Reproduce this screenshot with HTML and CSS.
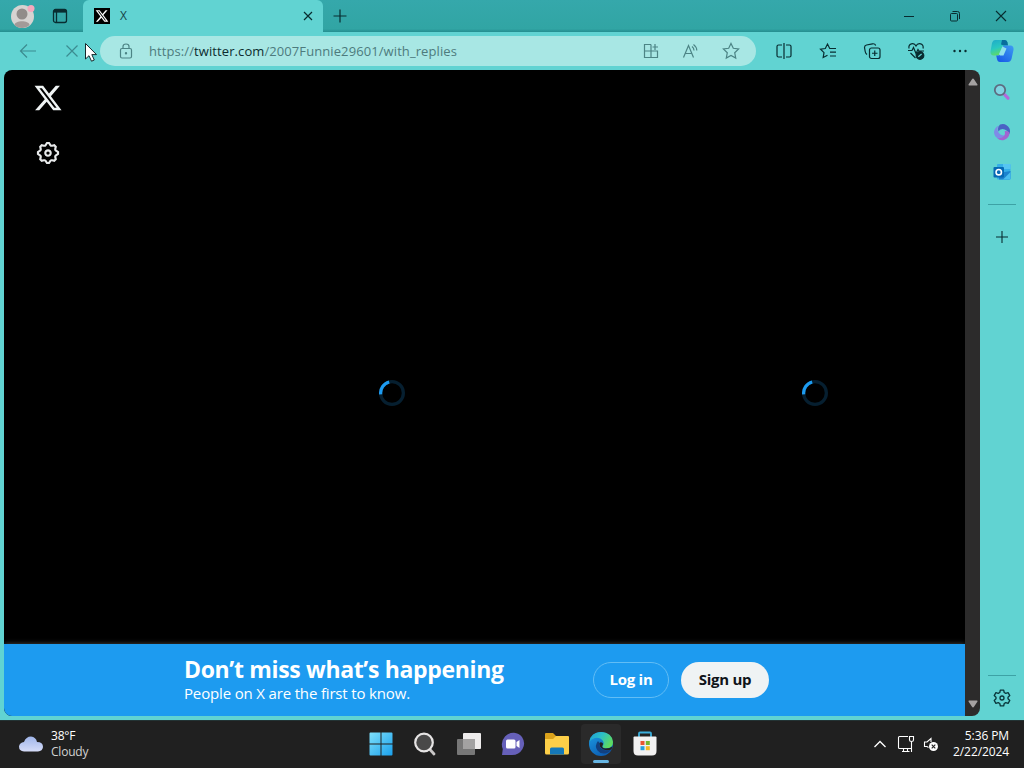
FILE: index.html
```html
<!DOCTYPE html>
<html lang="en">
<head>
<meta charset="UTF-8">
<title>X</title>
<link rel="stylesheet" href="styles.css">
</head>
<body>

<header class="titlebar">
  <div class="profile">
    <svg width="26" height="26" viewBox="0 0 26 26"><circle cx="12.5" cy="13.5" r="11.5" fill="#d6d3d1"/><circle cx="12" cy="11" r="5.5" fill="#918c8a"/><path d="M4.5 22C5 17 19 17 19.500 22C16 26 8 26 4.500 22Z" fill="#a39a98"/><circle cx="21" cy="5.500" r="3.500" fill="#f4a9bd"/></svg>
  </div>
  <div class="workspace">
    <svg width="16" height="16" viewBox="0 0 16 16" fill="none" stroke="#082c30" stroke-width="1.300"><rect x="1.500" y="1.500" width="13" height="13" rx="2"/><path d="M2 3.500H14M4.500 4V14" /><path d="M2 3H14" stroke-width="3"/></svg>
  </div>
  <div class="tab">
    <svg class="favicon" width="16" height="16" viewBox="0 0 24 24"><rect width="24" height="24" fill="#000"/><g transform="translate(1.400 1.400) scale(.88)" fill="#fff"><path d="M18.244 2.250h3.308l-7.227 8.260 8.502 11.240H16.170l-5.214-6.817L4.990 21.750H1.680l7.730-8.835L1.254 2.250H8.080l4.713 6.231zm-1.161 17.520h1.833L7.084 4.126H5.117z"/></g></svg>
    <span>X</span>
    <svg class="tab-close" width="10" height="10" viewBox="0 0 10 10"><path d="M1 1l8 8M9 1L1 9" stroke="#082c30" stroke-width="1.200"/></svg>
  </div>
  <svg class="new-tab" width="14" height="14" viewBox="0 0 14 14"><path d="M7 0.500V13.500M.5 7H13.500" stroke="#082c30" stroke-width="1.200"/></svg>
  <div class="window-buttons">
    <span><svg width="12" height="12" viewBox="0 0 12 12"><path d="M1 6.500H11" stroke="#082c30"/></svg></span>
    <span><svg width="12" height="12" viewBox="0 0 12 12" fill="none" stroke="#082c30"><rect x="1.500" y="3.500" width="7" height="7.500" rx="1"/><path d="M3.500 1.500H8.500Q10.500 1.500 10.500 3.500V9"/></svg></span>
    <span><svg width="12" height="12" viewBox="0 0 12 12"><path d="M1 1l10 10M11 1L1 11" stroke="#082c30" stroke-width="1.100"/></svg></span>
  </div>
</header>

<nav class="toolbar">
  <span class="tool faded"><svg width="18" height="16" viewBox="0 0 18 16"><path d="M17 8H1.500M8 1.500L1.500 8L8 14.500"/></svg></span>
  <span class="tool faded"><svg width="14" height="14" viewBox="0 0 14 14"><path d="M1.500 1.500l11 11M12.500 1.500l-11 11"/></svg></span>
  <div class="address">
    <svg class="lock" width="14" height="16" viewBox="0 0 14 16"><rect x="1.500" y="5.500" width="11" height="9.500" rx="1.500"/><path d="M4 5.500V3.500Q4 1 7 1T10 3.500V5.500"/><circle cx="7" cy="10.300" r=".6"/></svg>
    <span class="url">https://<b>twitter.com</b>/2007Funnie29601/with_replies</span>
    <span class="address-tool"><svg width="16" height="16" viewBox="0 0 16 16"><path d="M8 1.500H1.500V14.500H14.500V8H1.500M8 1.500V14.500M12 1V7M9.500 4H15"/></svg></span>
    <span class="address-tool"><svg width="18" height="16" viewBox="0 0 18 16"><path d="M1.500 14.500L6.500 2.500L11.500 14.500M3.200 10.500H9.800M10 3.500Q12 5 12 7.500M11.500 1.500Q14.800 4 14.800 7.500"/></svg></span>
    <span class="address-tool"><svg width="18" height="18" viewBox="0 0 18 18"><path d="M9 1.500L11.300 6.300L16.600 7L12.700 10.700L13.700 16L9 13.400L4.300 16L5.300 10.700L1.400 7L6.700 6.300Z"/></svg></span>
  </div>
  <span class="tool"><svg width="18" height="18" viewBox="0 0 18 18"><path d="M7 3H3.500Q2 3 2 4.500V13.500Q2 15 3.500 15H7M11 3H14.500Q16 3 16 4.500V13.500Q16 15 14.500 15H11M9 1V17"/></svg></span>
  <span class="tool"><svg width="18" height="18" viewBox="0 0 18 18"><path d="M17 6.500H10.700L8.500 2L6.300 6.500L1.500 7.200L5 10.700L4.200 15.500L8.500 13.300M11 10.200H17M11 14H17"/></svg></span>
  <span class="tool"><svg width="18" height="18" viewBox="0 0 18 18"><rect x="6.500" y="6" width="10.500" height="10.500" rx="2"/><path d="M11.750 8.500V14M9 11.250H14.500M4 12.500Q2.500 11.500 2.200 9.500L1.500 5.500Q1.500 3.500 3.500 3L9.500 1.800Q12 1.500 12.700 3.500"/></svg></span>
  <span class="tool"><svg width="18" height="18" viewBox="0 0 18 18"><path d="M1 8.500H5L6.500 5.500L9 11.500L11 7.500L12 9H17M2 6.500C1 1.500 7 0 9 4C11 0 17.500 1.500 16 6.500M3.500 11L8.500 16"/><circle cx="13" cy="13.500" r="3.800" fill="#082c30"/><path d="M11.300 14.800L14.600 12" stroke="#61d3d2"/></svg></span>
  <span class="tool"><svg width="16" height="4" viewBox="0 0 16 4"><g fill="#082c30" stroke="none"><circle cx="2.500" cy="2" r="1.200"/><circle cx="8" cy="2" r="1.200"/><circle cx="13.500" cy="2" r="1.200"/></g></svg></span>
  <span class="copilot">
    <svg width="24" height="24" viewBox="0 0 24 24">
      <defs>
        <linearGradient id="cpLeft" x1="0" y1="0" x2=".4" y2="1"><stop offset="0" stop-color="#1fa9c9"/><stop offset=".55" stop-color="#29c8c1"/><stop offset="1" stop-color="#62dc62"/></linearGradient>
        <linearGradient id="cpRight" x1="1" y1="0" x2=".2" y2="1"><stop offset="0" stop-color="#3e9df2"/><stop offset="1" stop-color="#175be7"/></linearGradient>
      </defs>
      <path d="M5 1H15Q17 1 17.500 3.500L18 6.500H14Q12.500 6.500 12 8L10 14.500Q9.500 16.500 7 16.500H4Q.2 16.500 .5 12.500L2 4Q2.800 1 5 1Z" fill="url(#cpLeft)"/>
      <path d="M12 1H15Q17 1 17.500 3.500L18 6.500H14L11 5.500Z" fill="#086d9c"/>
      <path d="M18 6.500H21Q24 7 23.500 11L21.500 20Q20.500 23 18 23H10Q7.500 23 7 20L6.200 16.500H8.500Q10 16.500 10.500 14.500L12.500 8Q13 6.500 15 6.500Z" fill="url(#cpRight)"/>
      <path d="M12.500 7.500L16.500 9.500L13.500 16.500H10L9 15Z" fill="#8fe0ec"/>
    </svg>
  </span>
</nav>

<div class="middle">
  <main class="page">
    <div class="content">
      <div class="site-nav">
        <svg width="30" height="30" viewBox="0 0 24 24" fill="#eff3f4"><path d="M18.244 2.250h3.308l-7.227 8.260 8.502 11.240H16.170l-5.214-6.817L4.990 21.750H1.680l7.730-8.835L1.254 2.250H8.080l4.713 6.231zm-1.161 17.520h1.833L7.084 4.126H5.117z"/></svg>
        <svg width="26" height="26" viewBox="0 0 24 24" fill="#e7e9ea"><path d="M10.540 1.750h2.920l1.570 2.360c.11.17.32.25.53.21l2.530-.59 2.170 2.170-.58 2.540c-.05.2.04.41.21.53l2.360 1.570v2.920l-2.360 1.570c-.17.12-.26.33-.21.53l.58 2.540-2.170 2.170-2.530-.59c-.21-.04-.42.04-.53.21l-1.570 2.360h-2.920l-1.580-2.360c-.11-.17-.32-.25-.52-.21l-2.540.59-2.170-2.170.58-2.540c.05-.2-.03-.41-.21-.53l-2.350-1.570v-2.920L4.100 8.970c.18-.12.26-.33.21-.53L3.730 5.900 5.900 3.730l2.540.59c.2.04.41-.04.52-.21l1.580-2.360zm1.070 2l-.98 1.470C10.050 6.080 9 6.500 7.990 6.270l-1.460-.34-.6.6.33 1.460c.24 1.010-.18 2.070-1.050 2.640l-1.460.98v.78l1.460.98c.87.57 1.290 1.630 1.050 2.640l-.33 1.460.6.6 1.460-.34c1.010-.23 2.060.19 2.640 1.050l.98 1.470h.78l.97-1.470c.58-.86 1.630-1.280 2.650-1.050l1.450.34.61-.6-.34-1.460c-.23-1.010.18-2.070 1.050-2.640l1.470-.98v-.78l-1.470-.98c-.87-.57-1.280-1.630-1.050-2.640l.34-1.460-.61-.6-1.450.34c-1.020.23-2.070-.19-2.650-1.050l-.97-1.470h-.78zM12 10.500c-.83 0-1.500.67-1.500 1.500s.67 1.500 1.500 1.500c.83 0 1.500-.67 1.500-1.500s-.67-1.500-1.500-1.500zM8.500 12c0-1.930 1.560-3.500 3.500-3.500 1.930 0 3.500 1.570 3.500 3.500s-1.570 3.500-3.500 3.500c-1.940 0-3.500-1.570-3.500-3.500z"/></svg>
      </div>
      <div class="timeline">
        <svg class="spinner" viewBox="0 0 32 32"><circle class="track" cx="16" cy="16" r="14"/><circle class="arc" cx="16" cy="16" r="14"/></svg>
      </div>
      <div class="trends">
        <svg class="spinner" viewBox="0 0 32 32"><circle class="track" cx="16" cy="16" r="14"/><circle class="arc" cx="16" cy="16" r="14"/></svg>
      </div>
    </div>
    <div class="login-bar">
      <div class="login-text">
        <h2>Don’t miss what’s happening</h2>
        <p>People on X are the first to know.</p>
      </div>
      <button class="login">Log in</button>
      <button class="signup">Sign up</button>
    </div>
  </main>
  <div class="scrollbar">
    <svg width="10" height="8" viewBox="0 0 10 8"><path d="M5 .5Q5.600 .5 6 1.200L9.500 6.500Q9.800 7.500 8.800 7.500H1.200Q.2 7.500 .5 6.500L4 1.200Q4.400 .5 5 .5Z" fill="#a5a2a2"/></svg>
    <svg width="10" height="8" viewBox="0 0 10 8"><path d="M5 7.500Q5.600 7.500 6 6.800L9.500 1.500Q9.800 .5 8.800 .5H1.200Q.2 .5 .5 1.500L4 6.800Q4.400 7.500 5 7.500Z" fill="#a5a2a2"/></svg>
  </div>
  <aside class="sidebar">
    <span><svg width="18" height="18" viewBox="0 0 18 18"><path d="M11 11L15 15.200" stroke="#b468dc" stroke-width="3.200" stroke-linecap="round"/><circle cx="7" cy="7" r="5.200" fill="#7fd4e2" stroke="#5d6c80" stroke-width="1.800"/></svg></span>
    <span><svg width="18" height="18" viewBox="0 0 18 18"><path d="M7 1.500Q13-.5 16.500 5.500Q17.500 8 16.500 11Q14 6.500 9.500 6Q6.500 6 5.500 8.500Q4 4 7 1.500Z" fill="#4a62c4"/><path d="M5.500 2.500Q3.500 6 5.500 9.500Q7.500 12.500 11.500 12.500Q9.500 16.500 6 16Q1 14 1 9Q1.500 4.500 5.500 2.500Z" fill="#7f8be8"/><path d="M16.500 9.500Q16.500 15 11 17Q7 18 4 15Q8.500 16 11 13Q12.500 11 11.800 8Q15 7.500 16.500 9.500Z" fill="#a264d2"/><circle cx="9" cy="9.300" r="2.300" fill="#61d3d2"/></svg></span>
    <span><svg width="18" height="18" viewBox="0 0 18 18"><rect x="4" y="1" width="13.500" height="15.500" rx="1" fill="#35aee8"/><path d="M10 1H17.500V6H10Z" fill="#56c5f2"/><path d="M6 10L17.500 8V15.500Q17.500 16.500 16 16.500H6Z" fill="#1b83cf"/><path d="M10 16.500L17.500 9V16.500Z" fill="#48bdf0"/><rect x=".5" y="4" width="10.500" height="10.500" rx="1" fill="#0669b4"/><circle cx="5.750" cy="9.200" r="2.700" fill="none" stroke="#fff" stroke-width="1.600"/></svg></span>
    <hr>
    <span class="add"><svg width="14" height="14" viewBox="0 0 14 14"><path d="M7 1V13M1 7H13" stroke="#082c30" stroke-width="1.100"/></svg></span>
    <hr class="bottom-line">
    <span class="settings"><svg width="18" height="18" viewBox="0 0 18 18" fill="none" stroke="#08363a" stroke-width="1.300" stroke-linejoin="round"><path d="M7.300 1.200H10.700L11.200 3.500L12.800 4.400L15.100 3.700L16.800 6.600L15 8.200V9.800L16.800 11.400L15.100 14.300L12.800 13.600L11.200 14.500L10.700 16.800H7.300L6.800 14.500L5.200 13.600L2.900 14.300L1.200 11.400L3 9.800V8.200L1.200 6.600L2.900 3.700L5.200 4.400L6.800 3.500Z"/><circle cx="9" cy="9" r="2"/></svg></span>
  </aside>
</div>

<footer class="taskbar">
  <div class="weather">
    <svg width="26" height="18" viewBox="0 0 26 18">
      <defs><linearGradient id="cloud" x1="0" y1="0" x2="0" y2="1"><stop offset="0" stop-color="#9fb5ea"/><stop offset="1" stop-color="#d5dcf8"/></linearGradient></defs>
      <path d="M6 16.500Q1 16 1 11.500Q1.500 7.500 6 7Q8 1.500 13 1.500Q18 2 19 7Q25 7 25 12Q24.500 16 20 16.500Z" fill="url(#cloud)"/>
    </svg>
    <div><div>38°F</div><div class="sky">Cloudy</div></div>
  </div>
  <div class="apps">
    <span><svg width="24" height="24" viewBox="0 0 24 24"><defs><linearGradient id="win" x1="0" y1="0" x2="1" y2="1"><stop offset="0" stop-color="#7fe0fb"/><stop offset="1" stop-color="#1aa0ec"/></linearGradient></defs><path d="M.5 1.500Q.5 .5 1.500 .5H11.500V11.500H.5ZM12.500 .5H22.500Q23.500 .5 23.500 1.500V11.500H12.500ZM.5 12.500H11.500V23.500H1.500Q.5 23.500 .5 22.500ZM12.500 12.500H23.500V22.500Q23.500 23.500 22.500 23.500H12.500Z" fill="url(#win)"/></svg></span>
    <span><svg width="24" height="24" viewBox="0 0 24 24"><path d="M16.500 17L21 22" stroke="#c9c7c7" stroke-width="2.800" stroke-linecap="round"/><circle cx="11" cy="10.500" r="8.800" fill="#494949" stroke="#e6e4e4" stroke-width="2.200"/></svg></span>
    <span><svg width="26" height="24" viewBox="0 0 26 24"><rect x="7" y="1" width="18" height="16" rx="1" fill="#eeecec"/><rect x="1" y="7" width="18" height="16" rx="1" fill="#777"/><path d="M7 7H19V17H7Z" fill="#a3a2a2"/></svg></span>
    <span><svg width="24" height="24" viewBox="0 0 24 24"><path d="M1 23L1.800 17Q-1 10 4 4.500Q8 .5 13 .7Q18 1 21 5Q25 11 21.500 17Q18 23 11 23Z" fill="#6660b9"/><path d="M5 9Q5 7.500 6.500 7.500H13Q14.500 7.500 14.500 9V15Q14.500 16.500 13 16.500H6.500Q5 16.500 5 15ZM15.500 10L18.500 8V16L15.500 14Z" fill="#fff"/></svg></span>
    <span><svg width="26" height="24" viewBox="0 0 26 24"><path d="M1 2Q1 1 2 1H9L12 4V8H1Z" fill="#dba21b"/><path d="M1 7H9L12 4H24Q25 4 25 5V21Q25 22.500 23.500 22.500H2.500Q1 22.500 1 21Z" fill="#fdcf48"/><path d="M6 22.500V17Q6 15.500 7.500 15.500H18.500Q20 15.500 20 17V22.500Z" fill="#1579b9"/></svg></span>
    <span class="running">
      <svg width="26" height="26" viewBox="0 0 26 26">
        <defs>
          <linearGradient id="edgeTop" x1="0" y1="0" x2="1" y2=".5"><stop offset="0" stop-color="#1b9ad8"/><stop offset=".5" stop-color="#2cc0c6"/><stop offset="1" stop-color="#5ddb61"/></linearGradient>
          <linearGradient id="edgeLeft" x1="0" y1="0" x2=".6" y2="1"><stop offset="0" stop-color="#1d9ee5"/><stop offset="1" stop-color="#0c5db2"/></linearGradient>
        </defs>
        <circle cx="13" cy="13" r="12" fill="url(#edgeLeft)"/>
        <path d="M1.200 11Q3 1 13 1Q24 1.500 25 11Q25 17 19 17.200Q14 17.300 14.500 15Q16.500 13 15 10Q12 6 7 7Q3 8 1.200 11Z" fill="url(#edgeTop)"/>
        <path d="M10 10Q6 15 9.500 19.500Q13 24 19 22Q21.500 21 23.500 18.500Q20 20 16 19Q10.500 17 11.500 12Z" fill="#12407f"/>
        <path d="M11.500 12Q13 10.500 15 12.500Q15 14 14.200 15Q14 17 17.500 17.500Q22 17.500 24.500 15.500L23.500 18.500Q19 20 15.500 18.500Q11 16.500 11.500 12Z" fill="#222"/>
      </svg>
    </span>
    <span><svg width="24" height="26" viewBox="0 0 24 26"><path d="M6 7V2.500Q6 1.500 7 1.500H17Q18 1.500 18 2.500V7" fill="none" stroke="#3aaedc" stroke-width="1.800"/><path d="M1.500 5.500H22.500Q23.500 5.500 23.500 6.500V20Q23.500 24.500 19 24.500H5Q.5 24.500 .5 20V6.500Q.5 5.500 1.500 5.500Z" fill="#f2f1f1"/><path d="M7.500 10H11.500V14H7.500Z" fill="#e85531"/><path d="M12.800 10H16.800V14H12.800Z" fill="#74b62d"/><path d="M7.500 15.200H11.500V19.200H7.500Z" fill="#259fdc"/><path d="M12.800 15.200H16.800V19.200H12.800Z" fill="#f3b924"/></svg></span>
  </div>
  <div class="tray">
    <svg width="14" height="8" viewBox="0 0 14 8"><path d="M1.500 7L7 1.500L12.500 7" fill="none" stroke="#fff" stroke-width="1.300"/></svg>
    <svg width="18" height="18" viewBox="0 0 18 18" fill="none" stroke="#fff" stroke-width="1.100"><path d="M11 1.500H2.500Q1.500 1.500 1.500 2.500V12.500Q1.500 13.500 2.500 13.500H14.500V7M5 16.500H12.500M6.500 13.500V16M10.500 13.500V16M12.500 1.500H16.500V5Q16.500 6.500 14.500 6.500T12.500 5ZM14.500 13V17"/></svg>
    <svg width="16" height="16" viewBox="0 0 16 16" fill="none" stroke="#fff" stroke-width="1.100"><path d="M5.500 11.500L4 10.500H1.500V6H4L8 2.500V6"/><circle cx="10.500" cy="10.500" r="4.500" fill="#fff" stroke="none"/><path d="M8.700 8.700L12.300 12.300M12.300 8.700L8.700 12.300" stroke="#202020"/></svg>
  </div>
  <div class="clock"><div>5:36 PM</div><div>2/22/2024</div></div>
</footer>

<svg class="cursor" width="14" height="22" viewBox="0 0 14 22"><path d="M1.500 1.500V17L5 13.700L7.500 19.200L10.300 18L7.800 12.600H12.500Z" fill="#fff" stroke="#14282b"/></svg>

</body>
</html>
```
FILE: styles.css
```css
* {
  box-sizing: border-box;
}

body {
  margin: 0;
  width: 1024px;
  height: 768px;
  display: flex;
  flex-direction: column;
  overflow: hidden;
  background-color: #61d3d2;
  font-family: "Open Sans", "Noto Sans", sans-serif;
  font-size: 12px;
}

svg {
  display: block;
  flex: none;
}

/* title bar */
.titlebar {
  display: flex;
  align-items: center;
  height: 32px;
  background: linear-gradient(#35a8ab, #31a5a4 90%, #258e90);
}

.profile {
  padding-left: 10px;
  width: 52px;
}

.workspace {
  width: 31px;
}

.tab {
  display: flex;
  align-items: center;
  width: 240px;
  height: 32px;
  padding: 0 10px 0 11px;
  border-radius: 6px 6px 0 0;
  background-color: #61d3d2;
  color: #174347;
}

.tab span {
  margin-left: 10px;
  padding-bottom: 1px;
}

.tab-close {
  margin-left: auto;
}

.new-tab {
  margin-left: 10px;
}

.window-buttons {
  display: flex;
  margin-left: auto;
}

.window-buttons span {
  display: flex;
  justify-content: center;
  width: 46px;
}

/* toolbar */
.toolbar {
  display: flex;
  align-items: center;
  height: 38px;
  padding-left: 6px;
}

.tool {
  display: flex;
  align-items: center;
  justify-content: center;
  width: 44px;
}

.tool svg,
.address svg {
  fill: none;
  stroke: #082c30;
  stroke-width: 1.2;
}

.tool.faded svg {
  stroke: #3b8c90;
}

.address {
  display: flex;
  align-items: center;
  width: 656px;
  height: 30px;
  margin: 0 6px;
  padding: 0 5px 0 19px;
  border-radius: 15px;
  background-color: #a8e7e4;
  color: #4d7b7d;
}

.address svg {
  stroke: #4c8485;
}

.url {
  flex: 1;
  margin-left: 16px;
  font-size: 13px;
  letter-spacing: 0.09px;
}

.url b {
  font-weight: normal;
  color: #0c2c2f;
}

.address-tool {
  display: flex;
  justify-content: center;
  width: 40px;
}

.copilot {
  display: flex;
  justify-content: center;
  width: 40px;
}

/* web page */
.middle {
  display: flex;
  height: 646px;
  margin-bottom: 4px;
  padding-left: 4px;
}

.page {
  display: flex;
  flex-direction: column;
  width: 961px;
  overflow: hidden;
  border-radius: 8px 0 0 8px;
  background-color: #000;
}

.content {
  display: flex;
  flex: 1;
}

.site-nav {
  display: flex;
  flex-direction: column;
  align-items: center;
  gap: 27px;
  width: 88px;
  padding-top: 13px;
}

.timeline,
.trends {
  display: flex;
  justify-content: center;
  padding-top: 310px;
}

.timeline {
  width: 600px;
}

.trends {
  width: 246px;
}

.spinner {
  width: 26px;
  height: 26px;
  fill: none;
  stroke: #1d9bf0;
  stroke-width: 4;
}

.track {
  opacity: 0.2;
}

.arc {
  stroke-dasharray: 20 68;
  transform: rotate(173deg);
  transform-origin: center;
}

.login-bar {
  display: flex;
  align-items: center;
  height: 72px;
  padding-left: 180px;
  background-color: #1d9bf0;
  box-shadow: 0 0 5px #4a4a4a;
  color: #fff;
}

.login-text {
  width: 409px;
  padding-bottom: 2px;
  white-space: nowrap;
}

.login-text h2 {
  margin: 0;
  font-size: 23px;
  line-height: 28px;
  letter-spacing: -0.34px;
}

.login-text p {
  margin: 0;
  font-size: 15px;
  line-height: 20px;
  letter-spacing: -0.16px;
}

.login-bar button {
  height: 36px;
  padding: 0 0 2px;
  border: none;
  border-radius: 18px;
  font: bold 15px "Open Sans", sans-serif;
  letter-spacing: -0.25px;
}

.login-bar .login {
  width: 76px;
  margin-right: 12px;
  border: 1px solid #62bdf5;
  background-color: transparent;
  color: #fff;
}

.login-bar .signup {
  width: 88px;
  background-color: #eff3f4;
  color: #0f1419;
}

.scrollbar {
  display: flex;
  flex-direction: column;
  align-items: center;
  justify-content: space-between;
  width: 15px;
  padding: 8px 0;
  border-radius: 0 8px 8px 0;
  background-color: #2c2b2b;
}

/* edge sidebar */
.sidebar {
  display: flex;
  flex-direction: column;
  align-items: center;
  width: 44px;
  padding-top: 2px;
}

.sidebar span {
  display: flex;
  align-items: center;
  height: 40px;
}

.sidebar hr {
  width: 28px;
  height: 1px;
  margin: 12px 0;
  border: none;
  background-color: #3da2a5;
}

.sidebar .bottom-line {
  margin: auto 0 4px;
}

.sidebar .settings {
  height: 36px;
}

/* taskbar */
.taskbar {
  display: flex;
  align-items: center;
  height: 48px;
  padding-bottom: 1px;
  border-top: 1px solid #233334;
  background-color: #202020;
  color: #fff;
  line-height: 16px;
}

.weather {
  display: flex;
  align-items: center;
  gap: 7px;
  width: 359px;
  padding-left: 18px;
  letter-spacing: -0.2px;
}

.sky {
  color: #d2d2d2;
}

.apps {
  display: flex;
}

.apps span {
  display: flex;
  align-items: center;
  justify-content: center;
  width: 40px;
  height: 40px;
  margin: 0 2px;
}

.apps .running {
  position: relative;
  border-radius: 4px;
  background-color: #2a2a2a;
}

.running::after {
  content: "";
  position: absolute;
  left: 12px;
  bottom: 1px;
  width: 16px;
  height: 3px;
  border-radius: 2px;
  background-color: #66b5e3;
}

.tray {
  display: flex;
  align-items: center;
  gap: 10px;
  margin-left: auto;
  margin-right: 14px;
}

.tray svg:last-child {
  margin-left: -2px;
}

.clock {
  padding-right: 15px;
  text-align: right;
  letter-spacing: -0.1px;
}

.cursor {
  position: absolute;
  left: 84px;
  top: 42px;
}
```
